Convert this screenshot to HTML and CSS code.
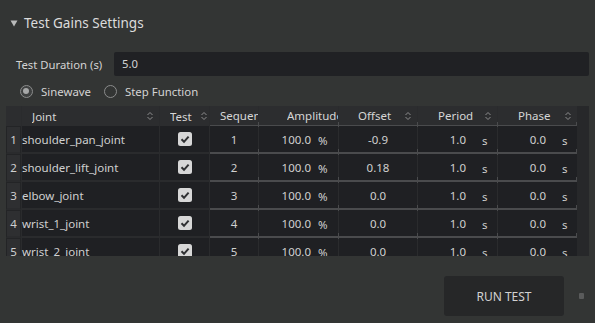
FILE: index.html
```html
<!DOCTYPE html>
<html lang="en">
<head>
    <meta charset="UTF-8">
    <meta name="viewport" content="width=device-width, initial-scale=1.0">
    <title>Test Gains Settings</title>
    <link rel="stylesheet" href="styles.css">
</head>
<body>
    <div class="panel">
        <div class="title">
            <svg class="caret" width="8" height="7" viewBox="0 0 8 7"><polygon points="0.5,0.5 7.5,0.5 4,6.5" fill="#b9baba"/></svg>
            <span>Test Gains Settings</span>
        </div>

        <div class="duration">
            <label class="dur-label">Test Duration (s)</label>
            <div class="text-input">5.0</div>
        </div>

        <div class="modes">
            <span class="radio checked"></span><span class="radio-label">Sinewave</span>
            <span class="radio"></span><span class="radio-label">Step Function</span>
        </div>

        <div class="table">
            <div class="grid">
                <!-- header -->
                <div class="th"></div>
                <div class="th c-joint"><span class="th-text">Joint</span><svg class="sort" width="6" height="10" viewBox="0 0 6 10"><path d="M0.5 4 L3 1.5 L5.5 4 M0.5 6 L3 8.5 L5.5 6" fill="none" stroke="#8c8d8e"/></svg></div>
                <div class="th c-test"><span class="th-text">Test</span><svg class="sort" width="6" height="10" viewBox="0 0 6 10"><path d="M0.5 4 L3 1.5 L5.5 4 M0.5 6 L3 8.5 L5.5 6" fill="none" stroke="#8c8d8e"/></svg></div>
                <div class="th c-seq spin-head"><span class="th-text">Sequence</span></div>
                <div class="th c-amp spin-head tick"><span class="th-text">Amplitude</span></div>
                <div class="th c-off spin-head tick"><span class="th-text">Offset</span><svg class="sort" width="6" height="10" viewBox="0 0 6 10"><path d="M0.5 4 L3 1.5 L5.5 4 M0.5 6 L3 8.5 L5.5 6" fill="none" stroke="#8c8d8e"/></svg></div>
                <div class="th c-per spin-head tick"><span class="th-text">Period</span><svg class="sort" width="6" height="10" viewBox="0 0 6 10"><path d="M0.5 4 L3 1.5 L5.5 4 M0.5 6 L3 8.5 L5.5 6" fill="none" stroke="#8c8d8e"/></svg></div>
                <div class="th c-pha spin-head tick tick-end"><span class="th-text">Phase</span><svg class="sort" width="6" height="10" viewBox="0 0 6 10"><path d="M0.5 4 L3 1.5 L5.5 4 M0.5 6 L3 8.5 L5.5 6" fill="none" stroke="#8c8d8e"/></svg></div>

                <!-- row 1 -->
                <div class="td rownum">1</div>
                <div class="td joint">shoulder_pan_joint</div>
                <div class="td check"><svg width="14" height="14" viewBox="0 0 14 14"><rect width="14" height="14" rx="2.5" fill="#d7d7d7"/><path d="M3.5 7.3 L6 9.8 L10.6 4.6" fill="none" stroke="#2f3032" stroke-width="2"/></svg></div>
                <div class="td spin center">1</div>
                <div class="td spin tick"><span class="val">100.0</span><span class="unit pct">%</span></div>
                <div class="td spin center tick">-0.9</div>
                <div class="td spin tick"><span class="val">1.0</span><span class="unit">s</span></div>
                <div class="td spin tick tick-end"><span class="val">0.0</span><span class="unit">s</span></div>

                <!-- row 2 -->
                <div class="td rownum">2</div>
                <div class="td joint">shoulder_lift_joint</div>
                <div class="td check"><svg width="14" height="14" viewBox="0 0 14 14"><rect width="14" height="14" rx="2.5" fill="#d7d7d7"/><path d="M3.5 7.3 L6 9.8 L10.6 4.6" fill="none" stroke="#2f3032" stroke-width="2"/></svg></div>
                <div class="td spin center">2</div>
                <div class="td spin tick"><span class="val">100.0</span><span class="unit pct">%</span></div>
                <div class="td spin center tick">0.18</div>
                <div class="td spin tick"><span class="val">1.0</span><span class="unit">s</span></div>
                <div class="td spin tick tick-end"><span class="val">0.0</span><span class="unit">s</span></div>

                <!-- row 3 -->
                <div class="td rownum">3</div>
                <div class="td joint">elbow_joint</div>
                <div class="td check"><svg width="14" height="14" viewBox="0 0 14 14"><rect width="14" height="14" rx="2.5" fill="#d7d7d7"/><path d="M3.5 7.3 L6 9.8 L10.6 4.6" fill="none" stroke="#2f3032" stroke-width="2"/></svg></div>
                <div class="td spin center">3</div>
                <div class="td spin tick"><span class="val">100.0</span><span class="unit pct">%</span></div>
                <div class="td spin center tick">0.0</div>
                <div class="td spin tick"><span class="val">1.0</span><span class="unit">s</span></div>
                <div class="td spin tick tick-end"><span class="val">0.0</span><span class="unit">s</span></div>

                <!-- row 4 -->
                <div class="td rownum">4</div>
                <div class="td joint">wrist_1_joint</div>
                <div class="td check"><svg width="14" height="14" viewBox="0 0 14 14"><rect width="14" height="14" rx="2.5" fill="#d7d7d7"/><path d="M3.5 7.3 L6 9.8 L10.6 4.6" fill="none" stroke="#2f3032" stroke-width="2"/></svg></div>
                <div class="td spin center">4</div>
                <div class="td spin tick"><span class="val">100.0</span><span class="unit pct">%</span></div>
                <div class="td spin center tick">0.0</div>
                <div class="td spin tick"><span class="val">1.0</span><span class="unit">s</span></div>
                <div class="td spin tick tick-end"><span class="val">0.0</span><span class="unit">s</span></div>

                <!-- row 5 -->
                <div class="td rownum">5</div>
                <div class="td joint">wrist_2_joint</div>
                <div class="td check"><svg width="14" height="14" viewBox="0 0 14 14"><rect width="14" height="14" rx="2.5" fill="#d7d7d7"/><path d="M3.5 7.3 L6 9.8 L10.6 4.6" fill="none" stroke="#2f3032" stroke-width="2"/></svg></div>
                <div class="td spin center">5</div>
                <div class="td spin tick"><span class="val">100.0</span><span class="unit pct">%</span></div>
                <div class="td spin center tick">0.0</div>
                <div class="td spin tick"><span class="val">1.0</span><span class="unit">s</span></div>
                <div class="td spin tick tick-end"><span class="val">0.0</span><span class="unit">s</span></div>

                <!-- row 6 -->
                <div class="td rownum">6</div>
                <div class="td joint">wrist_3_joint</div>
                <div class="td check"><svg width="14" height="14" viewBox="0 0 14 14"><rect width="14" height="14" rx="2.5" fill="#d7d7d7"/><path d="M3.5 7.3 L6 9.8 L10.6 4.6" fill="none" stroke="#2f3032" stroke-width="2"/></svg></div>
                <div class="td spin center">6</div>
                <div class="td spin tick"><span class="val">100.0</span><span class="unit pct">%</span></div>
                <div class="td spin center tick">0.0</div>
                <div class="td spin tick"><span class="val">1.0</span><span class="unit">s</span></div>
                <div class="td spin tick tick-end"><span class="val">0.0</span><span class="unit">s</span></div>
            </div>
            <div class="scroll-track"></div>
        </div>

        <div class="footer">
            <button class="run">RUN TEST</button>
            <span class="grip"></span>
        </div>
    </div>
</body>
</html>
```

FILE: styles.css
```css
html, body {
    margin: 0;
    background: #333534;
}

.panel {
    width: 595px;
    height: 323px;
    overflow: hidden;
    background: #333534;
    color: #d3d3d3;
    font-family: "Noto Sans", "DejaVu Sans", sans-serif;
}

.title {
    height: 46px;
    display: flex;
    align-items: center;
    gap: 6px;
    padding-left: 10px;
    font-size: 13.5px;
    color: #dcdcdc;
}

.duration {
    display: flex;
    align-items: center;
    height: 24px;
    margin: 6px 6px 0 16px;
    font-size: 11.3px;
}

.dur-label {
    width: 98px;
}

.text-input {
    flex: 1;
    height: 24px;
    line-height: 24px;
    padding-left: 8px;
    background: #202124;
    border-radius: 2px;
}

.modes {
    display: flex;
    align-items: center;
    height: 30px;
    padding-left: 20px;
    font-size: 11.4px;
}

.radio {
    position: relative;
    width: 13px;
    height: 13px;
    box-sizing: border-box;
    border: 1.5px solid #8b8c8c;
    border-radius: 50%;
}

.radio.checked {
    background: #3f4141;
}

.radio.checked::after {
    content: "";
    position: absolute;
    left: 2px;
    top: 2px;
    width: 6px;
    height: 6px;
    border-radius: 50%;
    background: #a7a8a8;
}

.radio-label {
    margin: 0 13px 0 8px;
}

/* table */
.table {
    display: flex;
    height: 150px;
    margin: 0 6px;
    overflow: hidden;
}

.grid {
    width: 571px;
    display: grid;
    grid-template-columns: 15px 137px 49px 48px 79px 78px 79px 79px;
    grid-template-rows: 20px;
    grid-auto-rows: 28px;
    column-gap: 1px;
    align-content: start;
    background: #2a2b2d;
}

.scroll-track {
    flex: 1;
    background: #27282a;
}

.th {
    position: relative;
    display: flex;
    align-items: center;
    box-sizing: border-box;
    white-space: nowrap;
    font-size: 11.5px;
    color: #d6d6d6;
    background: #2c2d2f;
}

.th-text {
    flex: 1;
    min-width: 0;
    overflow: hidden;
}

.sort {
    flex: none;
    margin-right: 6px;
}

.c-joint { padding-left: 10px; }
.c-test { padding-left: 10px; }
.c-test .sort { margin-right: 2px; }
.c-seq { padding-left: 10px; }
.c-amp { padding-left: 28px; }
.c-off { padding-left: 19px; }
.c-per { padding-left: 20px; }
.c-pha { padding-left: 20px; }

.spin-head {
    border-bottom: 1px solid #4a4b4d;
}

.td {
    position: relative;
    display: flex;
    align-items: center;
    box-sizing: border-box;
    white-space: nowrap;
    font-size: 11.5px;
    color: #d0d0d0;
    background: #1f2023;
    border-bottom: 2px solid #2a2b2d;
}

.rownum {
    justify-content: center;
    background: #2e2f31;
    border: 1px solid #232426;
    border-bottom-width: 2px;
    border-bottom-color: #2a2b2d;
}

.check {
    justify-content: center;
}

.spin {
    border-bottom-color: #4a4b4d;
}

.spin.center {
    justify-content: center;
}

.val {
    flex: 1;
    text-align: right;
}

.unit {
    width: 31px;
    padding-left: 16px;
    box-sizing: border-box;
    margin-top: 3px;
}

.unit.pct {
    width: 27px;
    padding-left: 7px;
}

/* little ticks where the spin underlines meet */
.tick::before {
    content: "";
    position: absolute;
    left: -1px;
    bottom: -3px;
    width: 1px;
    height: 6px;
    background: #4a4b4d;
}

.tick-end::after {
    content: "";
    position: absolute;
    right: 0;
    bottom: -3px;
    width: 1px;
    height: 6px;
    background: #4a4b4d;
}

.th.tick::before,
.th.tick-end::after {
    bottom: -2px;
    height: 5px;
}

/* footer */
.footer {
    display: flex;
    justify-content: flex-end;
    align-items: center;
    height: 40px;
    margin-top: 20px;
    padding-right: 11px;
}

.run {
    width: 120px;
    height: 40px;
    border: none;
    border-radius: 3px;
    background: #262728;
    color: #d2d2d2;
    font-family: "Noto Sans", "DejaVu Sans", sans-serif;
    font-size: 12px;
}

.grip {
    width: 5px;
    height: 6px;
    margin-left: 15px;
    border-radius: 1px;
    background: #5a5b5b;
}
```
